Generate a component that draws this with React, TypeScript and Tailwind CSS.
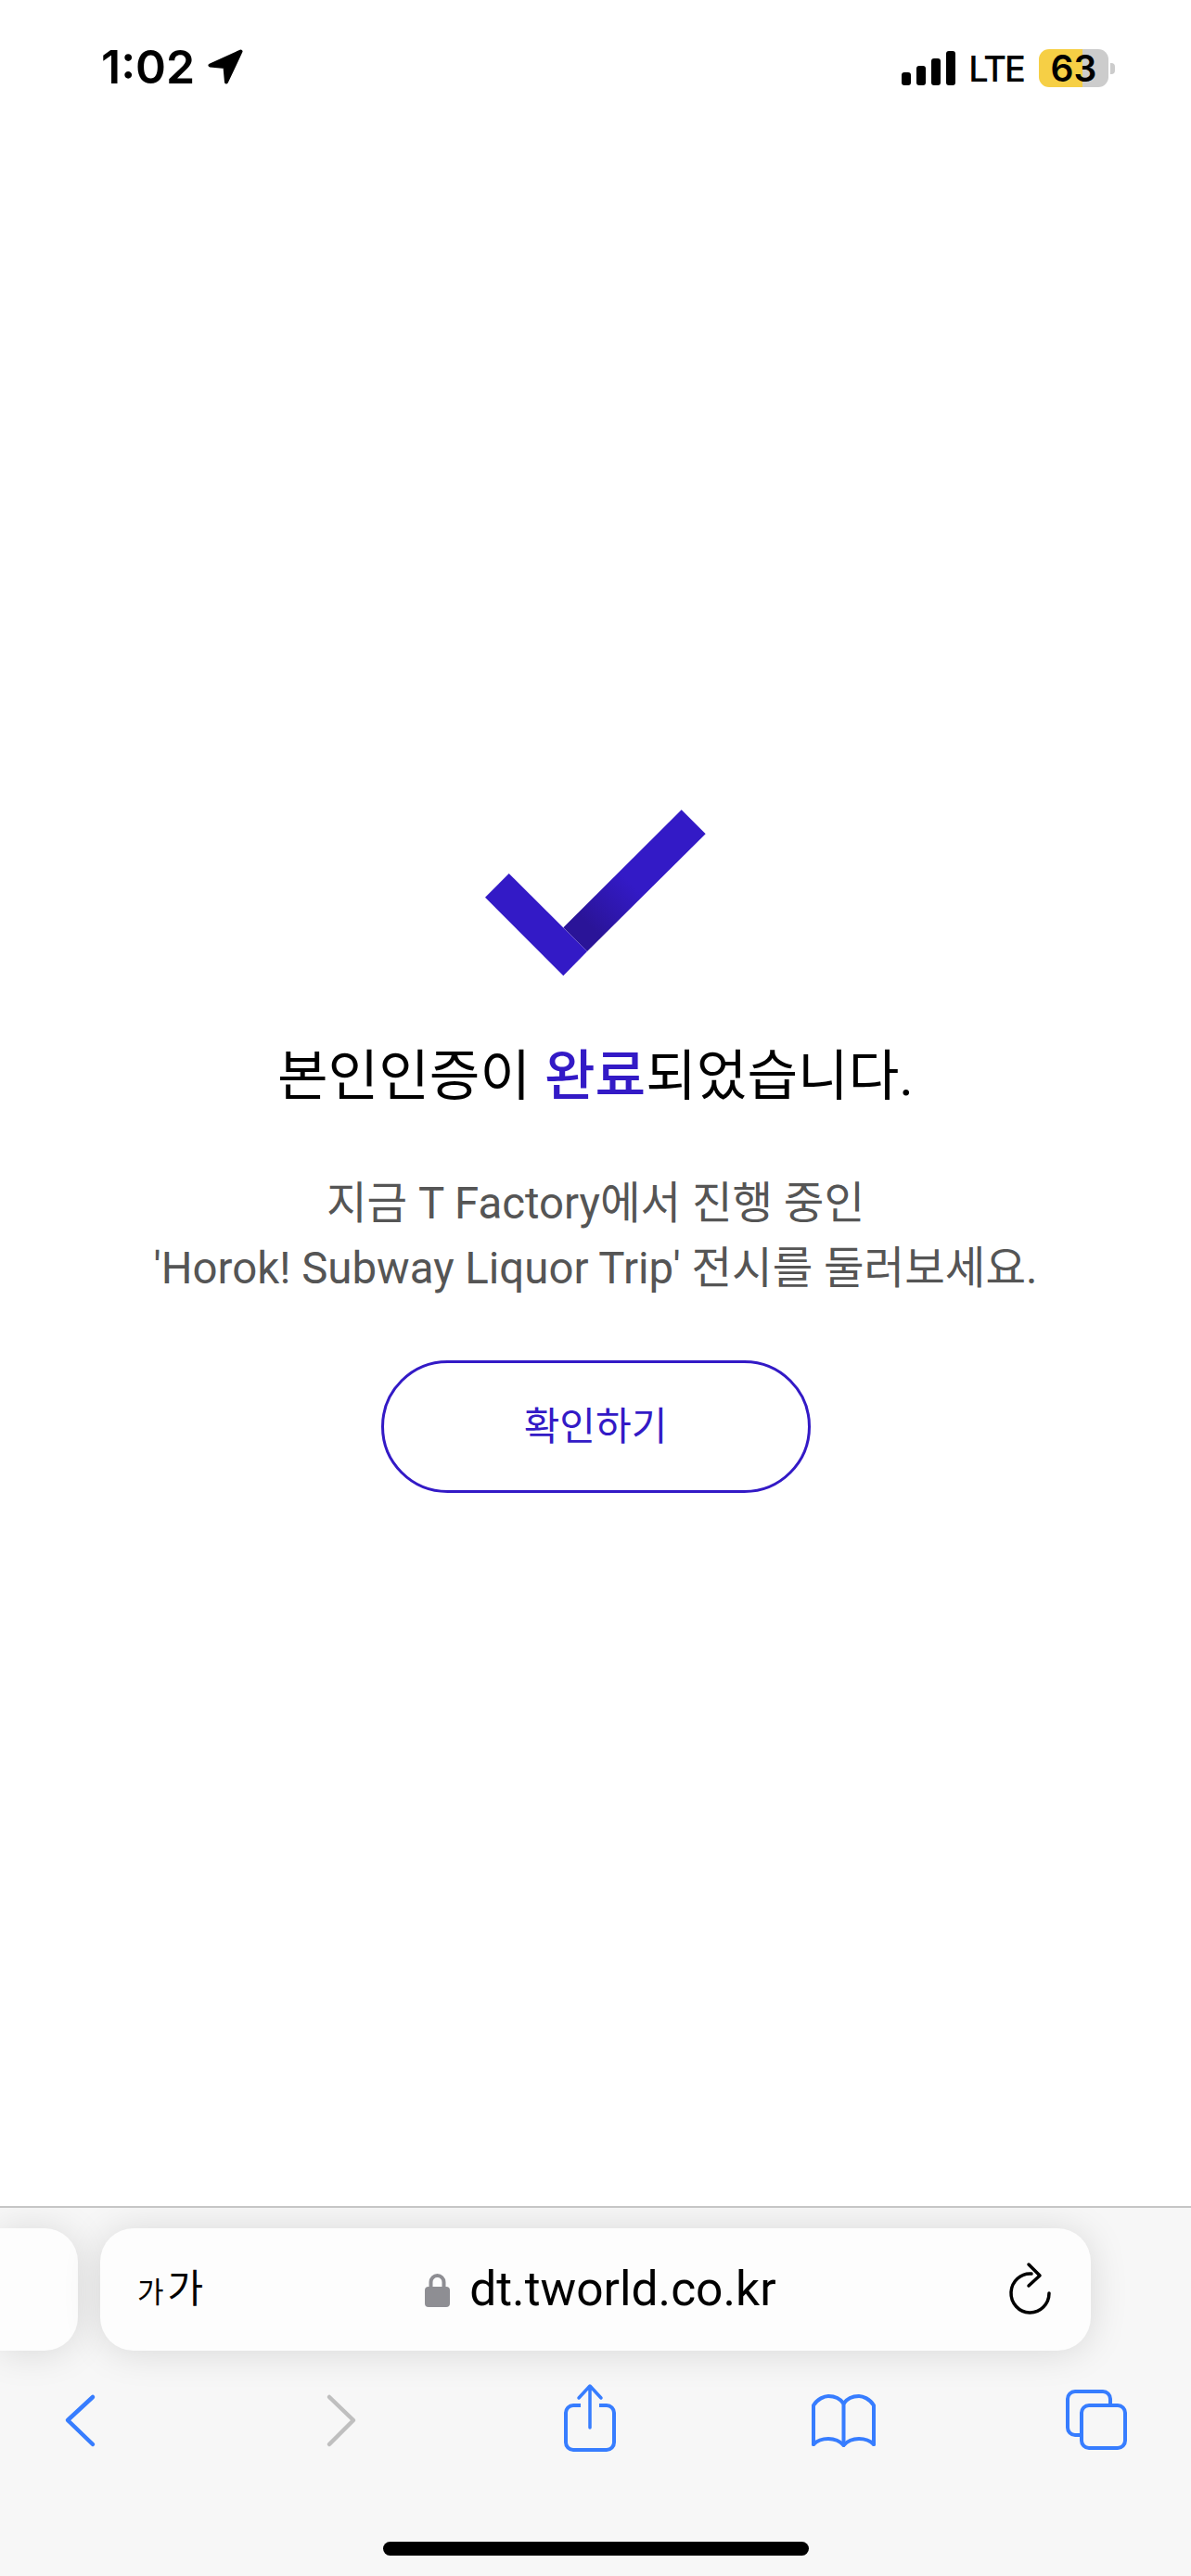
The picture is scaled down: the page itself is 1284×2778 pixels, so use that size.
const SANS = "font-['Roboto','Noto_Sans_CJK_KR',sans-serif]";

function LocationArrow() {
  return (
    <svg width="39" height="39" viewBox="0 0 39 39" className="ml-[14px] mt-[-1px]">
      <path d="M35.5 3.5 L2.5 18.5 L18.5 20 L20 36.5 Z" fill="#000" stroke="#000" strokeWidth="4" strokeLinejoin="round" />
    </svg>
  );
}

function SignalBars() {
  return (
    <div className="flex items-end gap-[6px] h-[37px]">
      <div className="w-[10px] h-[14px] rounded-[3px] bg-black" />
      <div className="w-[10px] h-[21px] rounded-[3px] bg-black" />
      <div className="w-[10px] h-[29px] rounded-[3px] bg-black" />
      <div className="w-[10px] h-[37px] rounded-[3px] bg-black" />
    </div>
  );
}

function Battery() {
  return (
    <div className="flex items-center ml-[16px]">
      <div className="relative w-[75px] h-[41px] rounded-[11px] bg-[linear-gradient(90deg,#f6cf45_47px,#cccccc_47px)] flex items-center justify-center">
        <span className="font-['Inter',sans-serif] font-semibold text-[39px] leading-[41px] text-black">63</span>
      </div>
      <div className="w-[5px] h-[12px] ml-[2px] rounded-r-[4px] bg-[#cccccc]" />
    </div>
  );
}

function StatusBar() {
  return (
    <div className="h-[120px] flex justify-between items-start pt-[53px] pl-[109px] pr-[82px] font-['Inter',sans-serif] text-black">
      <div className="flex items-start">
        <span className="font-semibold text-[50px] leading-[39px]">1:02</span>
        <LocationArrow />
      </div>
      <div className="flex items-center h-[41px]">
        <SignalBars />
        <span className="ml-[14px] font-medium text-[38px] leading-none tracking-[-2px]">LTE</span>
        <Battery />
      </div>
    </div>
  );
}

function CheckMark() {
  return (
    <svg width="246" height="186" viewBox="0 0 246 186">
      <defs>
        <linearGradient id="fold" gradientUnits="userSpaceOnUse" x1="105" y1="147" x2="165" y2="87">
          <stop offset="0" stopColor="#2a1498" />
          <stop offset="0.25" stopColor="#2a1498" />
          <stop offset="1" stopColor="#331ac6" />
        </linearGradient>
      </defs>
      <polygon points="88.3,130.3 215.7,3.3 241.7,29.3 114,156" fill="url(#fold)" />
      <polygon points="4,97.7 29.7,72 114,156 88.3,182.3" fill="#331ac6" />
    </svg>
  );
}

function LockIcon() {
  return (
    <svg width="27" height="38" viewBox="0 0 27 38">
      <path d="M6.5 18 V11 a7 7 0 0 1 14 0 V18" fill="none" stroke="#8e8e93" strokeWidth="4" />
      <rect x="0" y="16" width="27" height="22" rx="4" fill="#8e8e93" />
    </svg>
  );
}

function ReloadIcon() {
  return (
    <svg width="50" height="60" viewBox="0 0 50 60" fill="none" stroke="#000" strokeWidth="3.5" strokeLinecap="round" strokeLinejoin="round">
      <path d="M45 34 A20.5 21 0 1 1 26 13" />
      <path d="M23 3 L35 15 L23 26" />
    </svg>
  );
}

function UrlBar() {
  return (
    <div className="flex gap-[24px] pt-[22px]">
      <div className="w-[84px] h-[132px] rounded-r-[36px] bg-[#fdfdfd] shadow-[0_2px_40px_rgba(0,0,0,0.13)]" />
      <div className="w-[1068px] h-[132px] rounded-[36px] bg-[#fdfdfd] shadow-[0_2px_40px_rgba(0,0,0,0.13)] flex items-center pl-[40px] pr-[40px] text-black">
        <div className={`flex items-baseline gap-[4px] ${SANS}`}>
          <span className="text-[31px] leading-none">가</span>
          <span className="text-[42px] leading-none">가</span>
        </div>
        <div className="flex items-center ml-[239px]">
          <LockIcon />
          <span className={`ml-[21px] text-[51.5px] leading-none ${SANS}`}>dt.tworld.co.kr</span>
        </div>
        <div className="ml-auto">
          <ReloadIcon />
        </div>
      </div>
    </div>
  );
}

function Toolbar() {
  return (
    <div className="flex items-start pt-[35px] h-[111px]">
      <svg width="40" height="76" viewBox="0 0 40 76" className="ml-[66px]" fill="none" stroke="#377dff" strokeWidth="4.5" strokeLinecap="round" strokeLinejoin="round">
        <polyline points="34,15 7,40 34,66" />
      </svg>
      <svg width="40" height="76" viewBox="0 0 40 76" className="ml-[242px]" fill="none" stroke="#bfbfbf" strokeWidth="4.5" strokeLinecap="round" strokeLinejoin="round">
        <polyline points="7,15 33,40 7,66" />
      </svg>
      <svg width="64" height="76" viewBox="0 0 64 76" className="ml-[216px]" fill="none" stroke="#377dff" strokeWidth="4" strokeLinecap="round" strokeLinejoin="round">
        <path d="M22 24 H14 a8 8 0 0 0 -8 8 V64 a8 8 0 0 0 8 8 H50 a8 8 0 0 0 8 -8 V32 a8 8 0 0 0 -8 -8 H42" strokeLinecap="butt" />
        <path d="M32 48 V4 M20 16 L32 3 L44 16" strokeWidth="3.5" />
      </svg>
      <svg width="80" height="76" viewBox="0 0 80 76" className="ml-[202px]" fill="none" stroke="#377dff" strokeWidth="4" strokeLinecap="round" strokeLinejoin="round">
        <path d="M7 66 V24 C11 17 19 14 23 14 C30 14 36 17 39.5 22 C43 17 49 14 56 14 C60 14 68 17 72 24 V66" />
        <path d="M7 66 C12 61 18 60 23 60 C30 60 35 62 39.5 67 C44 62 49 60 56 60 C61 60 67 61 72 66" />
        <path d="M39.5 22 V67" />
      </svg>
      <svg width="74" height="76" viewBox="0 0 74 76" className="ml-[195px]" fill="none" stroke="#377dff" strokeWidth="4" strokeLinecap="round" strokeLinejoin="round">
        <path d="M19 56 H14 a8 8 0 0 1 -8 -8 V17 a8 8 0 0 1 8 -8 H44 a8 8 0 0 1 8 8 V22" />
        <rect x="21" y="24" width="47" height="46" rx="8" />
      </svg>
    </div>
  );
}

function BrowserChrome() {
  return (
    <div className="h-[399px] bg-[#f7f7f7] border-t-2 border-[#c6c6c6] overflow-hidden">
      <UrlBar />
      <Toolbar />
      <div className="flex justify-center mt-[95px]">
        <div className="w-[459px] h-[15px] rounded-full bg-black" />
      </div>
    </div>
  );
}

export default function App() {
  return (
    <div className="w-[1284px] h-[2778px] flex flex-col bg-white overflow-hidden">
      <StatusBar />
      <main className={`flex-1 flex flex-col items-center pt-[750px] ${SANS}`}>
        <CheckMark />
        <h1 className="mt-[65px] text-[59.4px] leading-[80px] font-normal text-black">
          본인인증이 <span className="font-medium text-[#331ac6]">완료</span>되었습니다.
        </h1>
        <p className="mt-[62px] text-[47.4px] leading-[70px] text-center text-[#555555]">
          지금 T Factory에서 진행 중인
          <br />
          'Horok! Subway Liquor Trip' 전시를 둘러보세요.
        </p>
        <button className="mt-[64px] w-[463px] h-[143px] rounded-full border-[3px] border-[#331ac6] text-[42px] text-[#331ac6]">
          확인하기
        </button>
      </main>
      <BrowserChrome />
    </div>
  );
}
